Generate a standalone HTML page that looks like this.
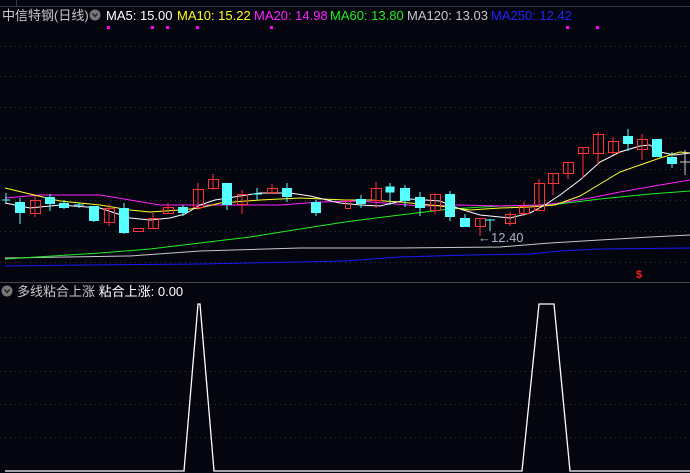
<!DOCTYPE html>
<html><head><meta charset="utf-8"><style>
html,body{margin:0;padding:0;background:#05050f;width:690px;height:473px;overflow:hidden;font-family:"Liberation Sans","Noto Sans CJK SC",sans-serif;}
.t{position:absolute;font-size:13px;white-space:nowrap;line-height:15px;}
</style></head><body>
<svg width="690" height="473" style="position:absolute;left:0;top:0">
<line x1="0" y1="6.5" x2="690" y2="6.5" stroke="#3a3a44"/>
<line x1="16.5" y1="0" x2="16.5" y2="6" stroke="#3a3a44"/>
<g stroke="#33333c" stroke-dasharray="1 4">
<line x1="0" y1="46.5" x2="690" y2="46.5"/><line x1="0" y1="76.5" x2="690" y2="76.5"/>
<line x1="0" y1="107.5" x2="690" y2="107.5"/><line x1="0" y1="138.5" x2="690" y2="138.5"/>
<line x1="0" y1="169.5" x2="690" y2="169.5"/><line x1="0" y1="200.5" x2="690" y2="200.5"/>
<line x1="0" y1="231.5" x2="690" y2="231.5"/><line x1="0" y1="262.5" x2="690" y2="262.5"/>
<line x1="0" y1="337.5" x2="690" y2="337.5"/><line x1="0" y1="371.5" x2="690" y2="371.5"/>
<line x1="0" y1="404.5" x2="690" y2="404.5"/><line x1="0" y1="437.5" x2="690" y2="437.5"/>
</g>
<line x1="0" y1="282.5" x2="690" y2="282.5" stroke="#44444c"/>
<g fill="#ff00ff"><rect x="107" y="26" width="3" height="3"/><rect x="151" y="26" width="3" height="3"/><rect x="166" y="26" width="3" height="3"/><rect x="196" y="26" width="3" height="3"/><rect x="270" y="26" width="3" height="3"/><rect x="566" y="26" width="3" height="3"/><rect x="596" y="26" width="3" height="3"/></g>
<g fill="none" stroke-width="1">
<polyline stroke="#1818ff" points="5,266 85,265 200,264 345,261 400,257 470,255 530,254 560,251 600,249 690,248"/>
<polyline stroke="#c8c8c8" points="5,258 130,256 200,251 300,248 345,248 400,248 500,247 550,243 600,240 650,237 690,235"/>
<polyline stroke="#22ee22" points="5,259 100,253 150,249 200,243 250,237 300,229 345,222 400,215 450,209 500,206 550,205 600,199 650,194 690,191"/>
<polyline stroke="#ff22ff" points="5,198 40,195 100,195 130,200 160,205 200,205 280,205 320,202 360,201 420,206 460,205 500,206 540,205 560,203 590,198 620,192 660,185 690,180"/>
<polyline stroke="#ffff22" points="5,188 30,194 60,201 100,205 130,210 150,212 180,210 200,208 220,203 260,200 300,198 345,200 370,200 400,202 440,206 470,210 500,208 530,207 555,205 580,196 600,184 620,172 640,165 660,158 680,152 690,153"/>
<polyline stroke="#ffffff" points="5,203 15,205 30,208 60,205 100,208 130,218 150,220 170,218 185,214 200,205 215,200 240,196 260,193 290,193 310,196 340,203 360,205 380,206 410,199 440,201 460,209 480,215 510,218 530,213 545,205 560,195 580,180 600,162 620,152 640,146 650,145 660,152 675,155 690,153"/>
</g>
<g stroke="#ff3333" fill="none">
<line x1="35" y1="196" x2="35" y2="217"/><rect x="30.5" y="200.5" width="10" height="13"/>
<line x1="109" y1="204" x2="109" y2="226"/><rect x="104.5" y="208.5" width="10" height="14"/>
<rect x="133.5" y="228.5" width="10" height="3"/>
<line x1="153" y1="213" x2="153" y2="228"/><rect x="148.5" y="218.5" width="10" height="10"/>
<line x1="168" y1="203" x2="168" y2="213"/><rect x="163.5" y="207.5" width="10" height="6"/>
<line x1="198" y1="183" x2="198" y2="210"/><rect x="193.5" y="189.5" width="10" height="18"/>
<line x1="213" y1="174" x2="213" y2="190"/><rect x="208.5" y="179.5" width="10" height="9"/>
<line x1="242" y1="190" x2="242" y2="214"/><rect x="237.5" y="194.5" width="10" height="10"/>
<line x1="272" y1="184" x2="272" y2="193"/><rect x="267.5" y="188.5" width="10" height="4"/>
<rect x="345.5" y="200.5" width="5" height="8"/>
<line x1="376" y1="182" x2="376" y2="208"/><rect x="371.5" y="188.5" width="10" height="12"/>
<line x1="435" y1="193" x2="435" y2="214"/><rect x="430.5" y="194.5" width="10" height="16"/>
<line x1="480" y1="218" x2="480" y2="236"/><rect x="475.5" y="218.5" width="10" height="8"/>
<line x1="510" y1="212" x2="510" y2="226"/><rect x="505.5" y="214.5" width="10" height="9"/>
<line x1="524" y1="201" x2="524" y2="216"/><rect x="519.5" y="206.5" width="10" height="7"/>
<line x1="539" y1="179" x2="539" y2="210"/><rect x="534.5" y="183.5" width="10" height="27"/>
<line x1="553" y1="173" x2="553" y2="195"/><rect x="548.5" y="173.5" width="10" height="10"/>
<line x1="568" y1="162" x2="568" y2="179"/><rect x="563.5" y="162.5" width="10" height="11"/>
<line x1="583" y1="147" x2="583" y2="178"/><rect x="578.5" y="147.5" width="10" height="6"/>
<line x1="598" y1="132" x2="598" y2="165"/><rect x="593.5" y="134.5" width="10" height="19"/>
<line x1="613" y1="137" x2="613" y2="155"/><rect x="608.5" y="141.5" width="10" height="11"/>
<line x1="642" y1="134" x2="642" y2="160"/><rect x="637.5" y="139.5" width="10" height="10"/>
</g>
<g fill="#55ffff" stroke="#55ffff">
<line x1="6" y1="193" x2="6" y2="203"/><line x1="2" y1="200" x2="10" y2="200"/>
<line x1="20" y1="198" x2="20" y2="224"/><rect x="15.5" y="202.5" width="9" height="10"/>
<line x1="50" y1="194" x2="50" y2="211"/><rect x="45.5" y="197.5" width="9" height="6"/>
<line x1="64" y1="200" x2="64" y2="209"/><rect x="59.5" y="203.5" width="9" height="4"/>
<line x1="79" y1="203" x2="79" y2="208"/><line x1="74" y1="205" x2="84" y2="205"/>
<rect x="89.5" y="206.5" width="9" height="14"/><line x1="94" y1="220" x2="94" y2="222"/>
<line x1="124" y1="203" x2="124" y2="234"/><rect x="119.5" y="208.5" width="9" height="24"/>
<line x1="183" y1="205" x2="183" y2="216"/><rect x="178.5" y="207.5" width="9" height="5"/>
<line x1="227" y1="183" x2="227" y2="210"/><rect x="222.5" y="183.5" width="9" height="21"/>
<line x1="257" y1="188" x2="257" y2="200"/><line x1="252" y1="194" x2="262" y2="194"/>
<line x1="287" y1="183" x2="287" y2="202"/><rect x="282.5" y="188.5" width="9" height="8"/>
<rect x="311.5" y="202.5" width="9" height="10"/><line x1="316" y1="200" x2="316" y2="216"/>
<line x1="361" y1="195" x2="361" y2="208"/><rect x="356.5" y="199.5" width="9" height="4"/>
<line x1="390" y1="183" x2="390" y2="205"/><rect x="386" y="187" width="8" height="5"/>
<line x1="405" y1="185" x2="405" y2="207"/><rect x="400.5" y="188.5" width="9" height="12"/>
<line x1="420" y1="192" x2="420" y2="216"/><rect x="415.5" y="197.5" width="9" height="10"/>
<line x1="450" y1="191" x2="450" y2="221"/><rect x="445.5" y="194.5" width="9" height="22"/>
<rect x="460.5" y="218.5" width="9" height="8"/><line x1="465" y1="214" x2="465" y2="218"/>
<line x1="490" y1="219" x2="490" y2="231"/><line x1="485" y1="220" x2="495" y2="220"/>
<line x1="628" y1="129" x2="628" y2="151"/><rect x="623.5" y="136.5" width="9" height="7"/>
<line x1="657" y1="139" x2="657" y2="157"/><rect x="652.5" y="139.5" width="9" height="17"/>
<line x1="672" y1="152" x2="672" y2="168"/><rect x="667.5" y="157.5" width="9" height="6"/>
</g>
<g stroke="#cccccc"><line x1="685" y1="150" x2="685" y2="175"/><line x1="680" y1="162" x2="690" y2="162"/></g>
<polyline fill="none" stroke="#ffffff" stroke-width="1.3" points="5,471 184,471 198,304 200,304 214,471 522,471 539,304 554,304 570,471 690,471"/>
<circle cx="95" cy="15" r="5.5" fill="#777"/><path d="M92.5 13.5 L95 16.5 L97.5 13.5" stroke="#222" stroke-width="1.4" fill="none"/>
<circle cx="7" cy="291" r="5.5" fill="#777"/><path d="M4.5 289.5 L7 292.5 L9.5 289.5" stroke="#222" stroke-width="1.4" fill="none"/>
</svg>
<div class="t" style="left:2px;top:8px;color:#c8c8c8">中信特钢(日线)</div>
<div class="t" style="left:106px;top:8px;color:#fff">MA5: 15.00</div>
<div class="t" style="left:177px;top:8px;color:#ffff22">MA10: 15.22</div>
<div class="t" style="left:254px;top:8px;color:#ff22ff">MA20: 14.98</div>
<div class="t" style="left:330px;top:8px;color:#22ee22">MA60: 13.80</div>
<div class="t" style="left:407px;top:8px;color:#c8c8c8">MA120: 13.03</div>
<div class="t" style="left:491px;top:8px;color:#2222ff">MA250: 12.42</div>
<div class="t" style="left:478px;top:230px;color:#a8b4c4">←12.40</div>
<div class="t" style="left:636px;top:268px;color:#ff2020;font-size:11px;font-weight:bold">$</div>
<div class="t" style="left:17px;top:284px;color:#c8c8c8">多线粘合上涨 <span style="color:#fff">粘合上涨: 0.00</span></div>
</body></html>
